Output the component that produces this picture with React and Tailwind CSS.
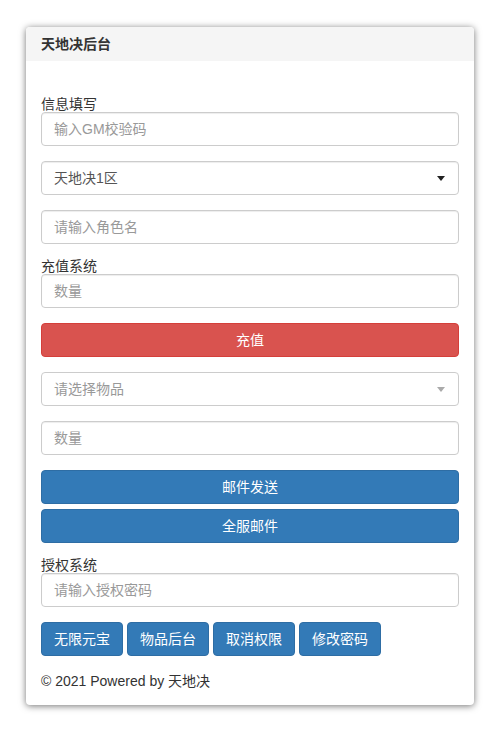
import React from "react";

const inputCls =
  "block w-full h-[34px] px-3 rounded border border-[#ccc] bg-white text-[14px] text-[#555] placeholder:text-[#999] shadow-[inset_0_1px_1px_rgba(0,0,0,0.075)] outline-none";

const labelCls = "block h-[15px] leading-[15px] overflow-visible";

function Caret({ color }) {
  return (
    <svg width="8" height="5" viewBox="0 0 8 5" className="absolute right-[14px] top-[15px]">
      <path d="M0 0 L8 0 L4 5 Z" fill={color} />
    </svg>
  );
}

function App() {
  return (
    <div
      className="min-h-screen bg-white pt-[27px] px-[26px] text-[14px] text-[#333]"
      style={{ fontFamily: '"Liberation Sans", "Noto Sans CJK SC", sans-serif' }}
    >
      <div className="rounded bg-white shadow-[0_1px_7px_rgba(0,0,0,0.55)] overflow-hidden">
        <div className="h-[34px] bg-[#f5f5f5] px-[15px] flex items-center font-bold text-[14px]">
          天地决后台
        </div>

        <div className="px-[15px] pt-[36px] pb-[14px]">
          <label className={labelCls}>信息填写</label>
          <input className={inputCls} placeholder="输入GM校验码" />

          <div className="relative mt-[15px] h-[34px]">
            <div className={inputCls + " flex items-center text-[#333]"}>天地决1区</div>
            <Caret color="#222" />
          </div>

          <input className={inputCls + " mt-[15px]"} placeholder="请输入角色名" />

          <label className={labelCls + " mt-[15px]"}>充值系统</label>
          <input className={inputCls} placeholder="数量" />

          <button className="block mt-[15px] w-full h-[34px] rounded border border-[#d43f3a] bg-[#d9534f] text-white text-[14px]">
            充值
          </button>

          <div className="relative mt-[15px] h-[34px]">
            <div className="flex items-center h-[34px] px-3 rounded border border-[#ccc] bg-white text-[#999]">
              请选择物品
            </div>
            <Caret color="#aaa" />
          </div>

          <input className={inputCls + " mt-[15px]"} placeholder="数量" />

          <button className="block mt-[15px] w-full h-[34px] rounded border border-[#2e6da4] bg-[#337ab7] text-white text-[14px]">
            邮件发送
          </button>
          <button className="block mt-[5px] w-full h-[34px] rounded border border-[#2e6da4] bg-[#337ab7] text-white text-[14px]">
            全服邮件
          </button>

          <label className={labelCls + " mt-[15px]"}>授权系统</label>
          <input className={inputCls} placeholder="请输入授权密码" />

          <div className="flex gap-[4px] mt-[15px] h-[34px]">
            {["无限元宝", "物品后台", "取消权限", "修改密码"].map((t) => (
              <button
                key={t}
                className="h-[34px] px-3 rounded border border-[#2e6da4] bg-[#337ab7] text-white text-[14px]"
              >
                {t}
              </button>
            ))}
          </div>

          <p className="mt-[15px] h-5 leading-5">© 2021 Powered by 天地决</p>
        </div>
      </div>
    </div>
  );
}

export default App;
